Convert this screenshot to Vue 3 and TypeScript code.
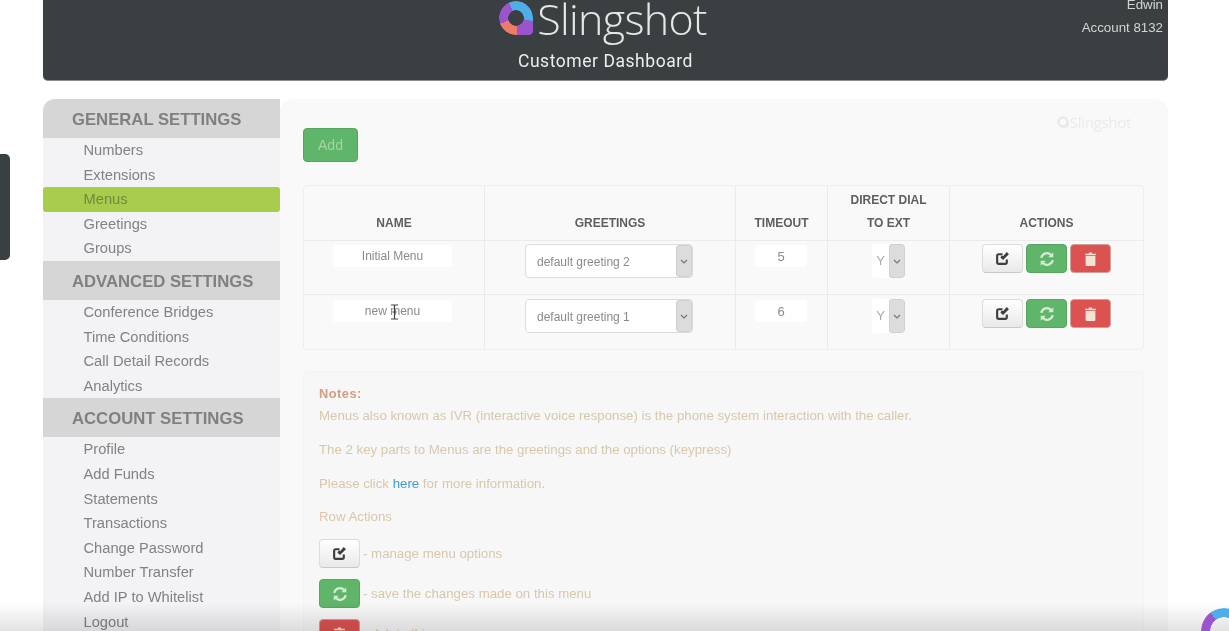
<script setup lang="ts">
interface MenuRow {
  name: string;
  greeting: string;
  timeout: number;
}

interface NavSection {
  title: string;
  items: string[];
}

const sections: NavSection[] = [
  { title: 'GENERAL SETTINGS', items: ['Numbers', 'Extensions', 'Menus', 'Greetings', 'Groups'] },
  { title: 'ADVANCED SETTINGS', items: ['Conference Bridges', 'Time Conditions', 'Call Detail Records', 'Analytics'] },
  {
    title: 'ACCOUNT SETTINGS',
    items: ['Profile', 'Add Funds', 'Statements', 'Transactions', 'Change Password', 'Number Transfer', 'Add IP to Whitelist', 'Logout'],
  },
];

const rows: MenuRow[] = [
  { name: 'Initial Menu', greeting: 'default greeting 2', timeout: 5 },
  { name: 'new menu', greeting: 'default greeting 1', timeout: 6 },
];
</script>

<template>
  <div class="page">
    <div class="side-tab"></div>

    <header class="top">
      <div class="brand">
        <span class="mark"></span>
        <span class="word">Slingshot</span>
      </div>
      <div class="subtitle">Customer Dashboard</div>
      <div class="account">
        <div>Edwin</div>
        <div>Account 8132</div>
      </div>
    </header>

    <div class="body">
      <nav class="nav">
        <section v-for="s in sections" :key="s.title">
          <h3>{{ s.title }}</h3>
          <a v-for="item in s.items" :key="item" :class="{ active: item === 'Menus' }">{{ item }}</a>
        </section>
      </nav>

      <main class="panel">
        <div class="watermark"><span class="mark small"></span>Slingshot</div>
        <button class="btn green add">Add</button>

        <table class="grid">
          <colgroup>
            <col style="width: 180px" />
            <col style="width: 251px" />
            <col style="width: 92px" />
            <col style="width: 122px" />
            <col />
          </colgroup>
          <thead>
            <tr>
              <th>NAME</th>
              <th>GREETINGS</th>
              <th>TIMEOUT</th>
              <th>DIRECT DIAL<br />TO EXT</th>
              <th>ACTIONS</th>
            </tr>
          </thead>
          <tbody>
            <tr v-for="(r, i) in rows" :key="r.name">
              <td>
                <div class="field name">
                  {{ r.name }}
                  <svg v-if="i === 1" class="ibeam" width="9" height="16" viewBox="0 0 9 16">
                    <path d="M1 1h7M1 15h7M4.500 1v14M2.500 8h4" fill="none" stroke="#444" stroke-width="1.200" />
                  </svg>
                </div>
              </td>
              <td>
                <div class="select wide">
                  <span>{{ r.greeting }}</span>
                  <i class="arrow"><svg width="8" height="5" viewBox="0 0 8 5"><path d="M1 1l3 3 3-3" fill="none" stroke="#777" stroke-width="1.200" /></svg></i>
                </div>
              </td>
              <td><div class="field num">{{ r.timeout }}</div></td>
              <td>
                <div class="select tiny">
                  <span>Y</span>
                  <i class="arrow"><svg width="8" height="5" viewBox="0 0 8 5"><path d="M1 1l3 3 3-3" fill="none" stroke="#777" stroke-width="1.200" /></svg></i>
                </div>
              </td>
              <td>
                <div class="actions">
                  <button class="btn plain icon">
                    <svg width="15" height="15" viewBox="0 0 14 14"><path d="M7 3H3.500A1.500 1.500 0 0 0 2 4.500v6A1.500 1.500 0 0 0 3.500 12h6a1.500 1.500 0 0 0 1.500-1.500V8" fill="none" stroke="#3e3e3e" stroke-width="2" /><path d="M5 6l2.500 2.500L13 3l-2-2-3.500 4-1-1z" fill="#3e3e3e" /></svg>
                  </button>
                  <button class="btn green icon">
                    <svg width="16" height="16" viewBox="0 0 14 14"><path d="M2 6a5 5 0 0 1 8.600-2.400M12 8a5 5 0 0 1-8.600 2.400" fill="none" stroke="#d6ead3" stroke-width="2" /><path d="M12.500 1v4.500H8zM1.500 13V8.500H6z" fill="#d6ead3" /></svg>
                  </button>
                  <button class="btn red icon">
                    <svg width="13" height="16" viewBox="0 0 12 14"><path d="M1.500 4h9v8.500a1 1 0 0 1-1 1h-7a1 1 0 0 1-1-1zM1 2.200h3.500V1h3v1.200H11V3.200H1z" fill="#f3e3d3" /></svg>
                  </button>
                </div>
              </td>
            </tr>
          </tbody>
        </table>

        <div class="notes">
          <h4>Notes:</h4>
          <p class="first">Menus also known as IVR (interactive voice response) is the phone system interaction with the caller.</p>
          <p>The 2 key parts to Menus are the greetings and the options (keypress)</p>
          <p>Please click <a>here</a> for more information.</p>
          <p>Row Actions</p>
          <div class="legend">
            <button class="btn plain icon">
              <svg width="15" height="15" viewBox="0 0 14 14"><path d="M7 3H3.500A1.500 1.500 0 0 0 2 4.500v6A1.500 1.500 0 0 0 3.500 12h6a1.500 1.500 0 0 0 1.500-1.500V8" fill="none" stroke="#3e3e3e" stroke-width="2" /><path d="M5 6l2.500 2.500L13 3l-2-2-3.500 4-1-1z" fill="#3e3e3e" /></svg>
            </button>
            <span>- manage menu options</span>
          </div>
          <div class="legend">
            <button class="btn green icon">
              <svg width="16" height="16" viewBox="0 0 14 14"><path d="M2 6a5 5 0 0 1 8.600-2.400M12 8a5 5 0 0 1-8.600 2.400" fill="none" stroke="#d6ead3" stroke-width="2" /><path d="M12.500 1v4.500H8zM1.500 13V8.500H6z" fill="#d6ead3" /></svg>
            </button>
            <span>- save the changes made on this menu</span>
          </div>
          <div class="legend">
            <button class="btn red icon">
              <svg width="13" height="16" viewBox="0 0 12 14"><path d="M1.500 4h9v8.500a1 1 0 0 1-1 1h-7a1 1 0 0 1-1-1zM1 2.200h3.500V1h3v1.200H11V3.200H1z" fill="#f3e3d3" /></svg>
            </button>
            <span>- delete this menu</span>
          </div>
        </div>
      </main>
    </div>

    <div class="fade"></div>
    <div class="corner-logo"></div>
  </div>
</template>

<style>
html,
body {
  margin: 0;
  background: #fff;
  overflow: hidden;
}
</style>

<style scoped>
.page {
  position: relative;
  width: 1229px;
  height: 631px;
  overflow: hidden;
  padding: 0 61px 0 43px;
  box-sizing: border-box;
  background: #fff;
  font-family: "Liberation Sans", Arial, sans-serif;
  color: #7c7c7c;
  filter: blur(0.4px);
}

.side-tab {
  position: absolute;
  left: 0;
  top: 154px;
  width: 10px;
  height: 106px;
  background: #3a3f42;
  border-radius: 0 5px 5px 0;
}

.top {
  position: relative;
  height: 81px;
  background: #3a3f42;
  border-radius: 0 0 5px 5px;
  border-bottom: 1px solid #8a8c8e;
  box-sizing: border-box;
  color: #f0f0f0;
  display: flex;
  flex-direction: column;
  align-items: center;
}

.brand {
  display: flex;
  align-items: flex-start;
  height: 41px;
  padding-top: 1px;
  box-sizing: border-box;
  margin-left: -5px;
}

.mark {
  display: block;
  width: 34px;
  height: 34px;
  border-radius: 50% 50% 4px 50%;
  background: conic-gradient(#4faee8 0 100deg, #9a55cc 100deg 175deg, #ef7a6a 175deg 250deg, #9a55cc 250deg 335deg, #4faee8 335deg);
  -webkit-mask: radial-gradient(circle at 50% 50%, transparent 7.500px, #000 8px);
  mask: radial-gradient(circle at 50% 50%, transparent 7.500px, #000 8px);
}

.word {
  font-family: "Open Sans", sans-serif;
  font-weight: 300;
  font-size: 43px;
  line-height: 36px;
  letter-spacing: -0.7px;
  color: #e6e6e6;
  margin-left: 4px;
}

.subtitle {
  margin-top: 9px;
  font-family: Roboto, sans-serif;
  font-size: 17.500px;
  line-height: 22px;
  letter-spacing: 0.55px;
  color: #ededed;
}

.account {
  position: absolute;
  right: 5px;
  top: 0;
  margin-top: -6px;
  text-align: right;
  font-size: 13.300px;
  line-height: 22.500px;
  color: #d4d4d4;
}

.body {
  display: flex;
  margin-top: 18px;
  height: 600px;
}

.nav {
  width: 237px;
  flex: none;
  background: #f3f3f5;
  border-radius: 12px 0 0 0;
  overflow: hidden;
}

.nav h3 {
  margin: 0;
  height: 39px;
  line-height: 41px;
  padding-left: 29px;
  background: #d6d6d6;
  font-size: 16.700px;
  font-weight: 700;
  color: #808080;
}

.nav a {
  display: block;
  height: 24.600px;
  line-height: 24.600px;
  padding-left: 40.500px;
  font-size: 14.700px;
  color: #828282;
}

.nav a.active {
  background: #a8cc4c;
  color: #6f8a45;
  border-radius: 3px;
}

.panel {
  position: relative;
  flex: 1;
  background: #f9f9f9;
  border-radius: 12px 12px 0 0;
  padding: 29px 24px 0 23px;
}

.watermark {
  position: absolute;
  right: 37px;
  top: 13px;
  display: flex;
  align-items: center;
  font-family: "Open Sans", sans-serif;
  font-size: 15px;
  letter-spacing: -0.3px;
  color: #ebebeb;
}

.mark.small {
  width: 12px;
  height: 12px;
  background: #eaeaea;
  -webkit-mask: radial-gradient(circle at 50% 50%, transparent 3px, #000 3.500px);
  mask: radial-gradient(circle at 50% 50%, transparent 3px, #000 3.500px);
  margin-right: 1px;
}

.btn {
  display: inline-flex;
  align-items: center;
  justify-content: center;
  box-sizing: border-box;
  border: 1px solid #d4d4d4;
  border-radius: 4px;
  padding: 0;
  font-family: inherit;
}

.btn.green {
  background: #5fb569;
  border-color: #56a560;
}

.btn.red {
  background: #dc5250;
  border-color: #d0a09a;
}

.btn.plain {
  background: linear-gradient(#fff, #e9e9e9);
  border-color: #dcdcdc;
  border-bottom-color: #c9c9c9;
}

.btn.icon {
  width: 41px;
  height: 29px;
}

.add {
  width: 55px;
  height: 34px;
  font-size: 14px;
  color: #a5d5a2;
}

.grid {
  margin-top: 23px;
  width: 841px;
  table-layout: fixed;
  border-collapse: separate;
  border-spacing: 0;
  border: 1px solid #eeeeee;
  border-radius: 4px;
  background: #f9f9f9;
}

.grid th,
.grid td {
  border-left: 1px solid #ebebeb;
  text-align: center;
  padding: 0;
}

.grid th:first-child,
.grid td:first-child {
  border-left: 0;
}

.grid th {
  height: 54px;
  font-size: 12px;
  line-height: 23px;
  font-weight: 700;
  color: #5e5e5e;
  vertical-align: bottom;
  padding-bottom: 5px;
  box-sizing: border-box;
}

.grid td {
  height: 54px;
  box-sizing: border-box;
  border-top: 1px solid #ebebeb;
  vertical-align: top;
}

.grid tbody tr:last-child td {
  height: 55px;
  padding-top: 1px;
}

.field {
  position: relative;
  background: #fff;
  border-radius: 3px;
  height: 22px;
  line-height: 23px;
  margin-top: 4px;
  font-size: 12px;
  color: #8a8a8a;
}

.field.name {
  width: 119px;
  margin-left: 29px;
}

.field.num {
  width: 52px;
  margin-left: 19px;
  font-size: 13px;
}

.ibeam {
  position: absolute;
  left: 57px;
  top: 4px;
}

.select {
  display: flex;
  background: #fff;
  margin-top: 3px;
  border-radius: 4px;
  height: 34px;
  box-sizing: border-box;
  font-size: 12px;
  color: #8a8a8a;
  overflow: hidden;
}

.select.wide {
  width: 168px;
  margin-left: 40px;
  border: 1px solid #dcdcdc;
}

.select.wide span {
  flex: 1;
  text-align: left;
  padding-left: 11px;
  line-height: 34px;
}

.select.tiny {
  width: 33px;
  margin-left: 44px;
}

.select.tiny span {
  flex: 1;
  line-height: 34px;
  font-size: 13px;
  color: #aaa;
}

.arrow {
  width: 16px;
  flex: none;
  background: #dcdcdc;
  border-radius: 3px;
  border: 1px solid #cfcfcf;
  box-sizing: border-box;
  display: flex;
  align-items: center;
  justify-content: center;
}

.actions {
  display: flex;
  justify-content: center;
  gap: 3px;
  margin-top: 3px;
}

.notes {
  margin-top: 21px;
  background: #f7f7f7;
  border: 1px solid #fbf1e8;
  border-radius: 4px;
  padding: 13px 15px;
  font-size: 13.250px;
  line-height: 17px;
  color: #d9c7ab;
}

.notes h4 {
  margin: 0;
  font-size: 12.800px;
  letter-spacing: 0.5px;
  color: #d49d82;
}

.notes p {
  margin: 16.800px 0 0;
}

.notes p.first {
  margin-top: 5px;
}

.notes a {
  color: #3d9ad6;
}

.legend {
  display: flex;
  align-items: center;
  gap: 3px;
  margin-top: 11px;
}

.legend:first-of-type {
  margin-top: 14px;
}

.fade {
  position: absolute;
  left: 0;
  right: 0;
  bottom: 0;
  height: 28px;
  background: linear-gradient(#fff, #e2e2e2);
  mix-blend-mode: multiply;
  pointer-events: none;
}

.corner-logo {
  position: absolute;
  left: 1201px;
  top: 608px;
  width: 46px;
  height: 46px;
  border-radius: 50%;
  background: conic-gradient(#4faee8 0 50%, #ef7a6a 50% 70%, #9a55cc 70% 90%, #4faee8 90%);
  -webkit-mask: radial-gradient(circle, transparent 13.500px, #000 14px);
  mask: radial-gradient(circle, transparent 13.500px, #000 14px);
}
</style>
